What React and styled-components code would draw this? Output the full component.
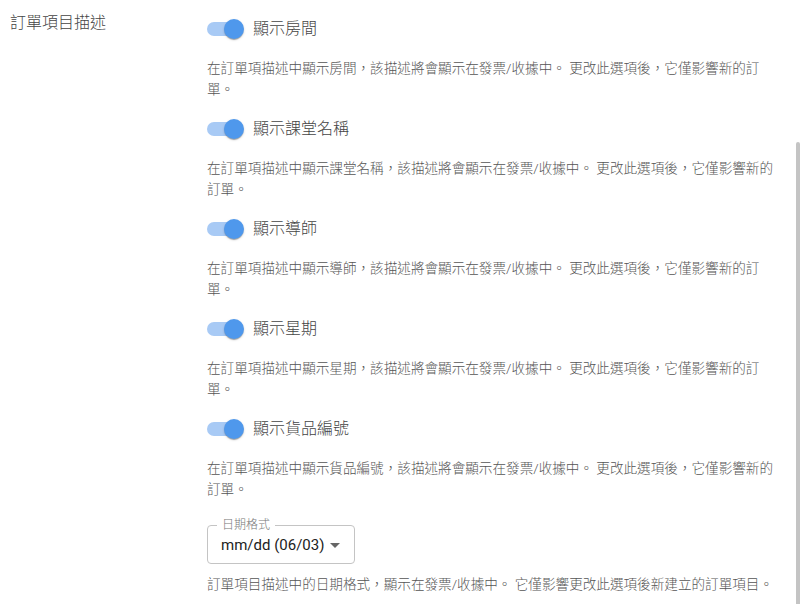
import React from "react";
import styled, { createGlobalStyle } from "styled-components";

// --- Data --- //

const options = [
  { key: "room", label: "顯示房間", field: "房間" },
  { key: "class", label: "顯示課堂名稱", field: "課堂名稱" },
  { key: "tutor", label: "顯示導師", field: "導師" },
  { key: "weekday", label: "顯示星期", field: "星期" },
  { key: "sku", label: "顯示貨品編號", field: "貨品編號" },
];

const describe = (field) =>
  `在訂單項描述中顯示${field}，該描述將會顯示在發票/收據中。 更改此選項後，它僅影響新的訂單。`;

// --- Components --- //

const Switch = ({ checked }) => (
  <SwitchRoot>
    <SwitchTrack $checked={checked} />
    <SwitchThumb $checked={checked} />
  </SwitchRoot>
);

const OptionItem = ({ label, field }) => (
  <OptionBlock>
    <SwitchRow>
      <Switch checked />
      <SwitchLabel>{label}</SwitchLabel>
    </SwitchRow>
    <HelperText>{describe(field)}</HelperText>
  </OptionBlock>
);

const ArrowDropDown = () => (
  <ArrowIcon viewBox="0 0 24 24" aria-hidden="true">
    <path d="M7 10l5 5 5-5z" />
  </ArrowIcon>
);

export default function App() {
  return (
    <>
      <GlobalStyle />
      <Page>
        <SectionLabel>訂單項目描述</SectionLabel>
        <Options>
          {options.map((o) => (
            <OptionItem key={o.key} label={o.label} field={o.field} />
          ))}
          <SelectField>
            <SelectLabel>日期格式</SelectLabel>
            <SelectValue>mm/dd (06/03)</SelectValue>
            <ArrowDropDown />
          </SelectField>
          <HelperText $gap={10}>
            訂單項目描述中的日期格式，顯示在發票/收據中。 它僅影響更改此選項後新建立的訂單項目。
          </HelperText>
        </Options>
      </Page>
      <ScrollThumb />
    </>
  );
}

// --- Styles --- //

const GlobalStyle = createGlobalStyle`
  body {
    margin: 0;
    background: #ffffff;
    font-family: Roboto, "Noto Sans CJK TC", "Noto Sans", sans-serif;
    font-weight: 300;
    color: #444444;
  }
`;

const Page = styled.div`
  display: flex;
  align-items: flex-start;
  padding: 10px 21px 0 10px;
`;

const SectionLabel = styled.div`
  flex: none;
  width: 197px;
  padding-top: 1px;
  font-size: 16px;
  line-height: 24px;
  color: #444444;
`;

const Options = styled.div`
  flex: 1;
  display: flex;
  flex-direction: column;
  align-items: flex-start;
`;

const OptionBlock = styled.div`
  padding-bottom: 11px;
`;

const SwitchRow = styled.label`
  display: flex;
  align-items: center;
  height: 38px;
  margin-left: -12px;
`;

const SwitchRoot = styled.span`
  position: relative;
  flex: none;
  display: inline-flex;
  width: 58px;
  height: 38px;
  padding: 12px;
  box-sizing: border-box;
`;

const SwitchTrack = styled.span`
  width: 34px;
  height: 14px;
  border-radius: 7px;
  background: ${(p) => (p.$checked ? "#a8caf5" : "#bdbdbd")};
`;

const SwitchThumb = styled.span`
  position: absolute;
  top: 9px;
  left: ${(p) => (p.$checked ? "29px" : "9px")};
  width: 20px;
  height: 20px;
  border-radius: 50%;
  background: ${(p) => (p.$checked ? "#4f98ec" : "#fafafa")};
  box-shadow: 0 2px 1px -1px rgba(0, 0, 0, 0.2), 0 1px 1px 0 rgba(0, 0, 0, 0.14),
    0 1px 3px 0 rgba(0, 0, 0, 0.12);
`;

const SwitchLabel = styled.span`
  font-size: 16px;
  line-height: 24px;
  color: #444444;
`;

const HelperText = styled.p`
  margin: ${(p) => p.$gap ?? 10}px 0 0 0;
  font-size: 13.6px;
  line-height: 20.5px;
  color: #555555;
`;

const SelectField = styled.div`
  position: relative;
  display: flex;
  align-items: center;
  width: 148px;
  height: 39px;
  margin-top: 15px;
  padding-left: 13px;
  box-sizing: border-box;
  border: 1px solid #c4c4c4;
  border-radius: 4px;
`;

const SelectLabel = styled.span`
  position: absolute;
  top: -8px;
  left: 9px;
  padding: 0 5px;
  background: #ffffff;
  font-size: 12px;
  line-height: 14px;
  color: #777777;
`;

const SelectValue = styled.span`
  font-size: 15px;
  font-weight: 400;
  color: #222222;
`;

const ArrowIcon = styled.svg`
  position: absolute;
  right: 7px;
  top: 7px;
  width: 24px;
  height: 24px;
  fill: #666666;
`;

const ScrollThumb = styled.div`
  position: fixed;
  top: 142px;
  right: 0;
  bottom: 0;
  width: 4px;
  border-radius: 3px 3px 0 0;
  background: #c4c4c4;
`;
